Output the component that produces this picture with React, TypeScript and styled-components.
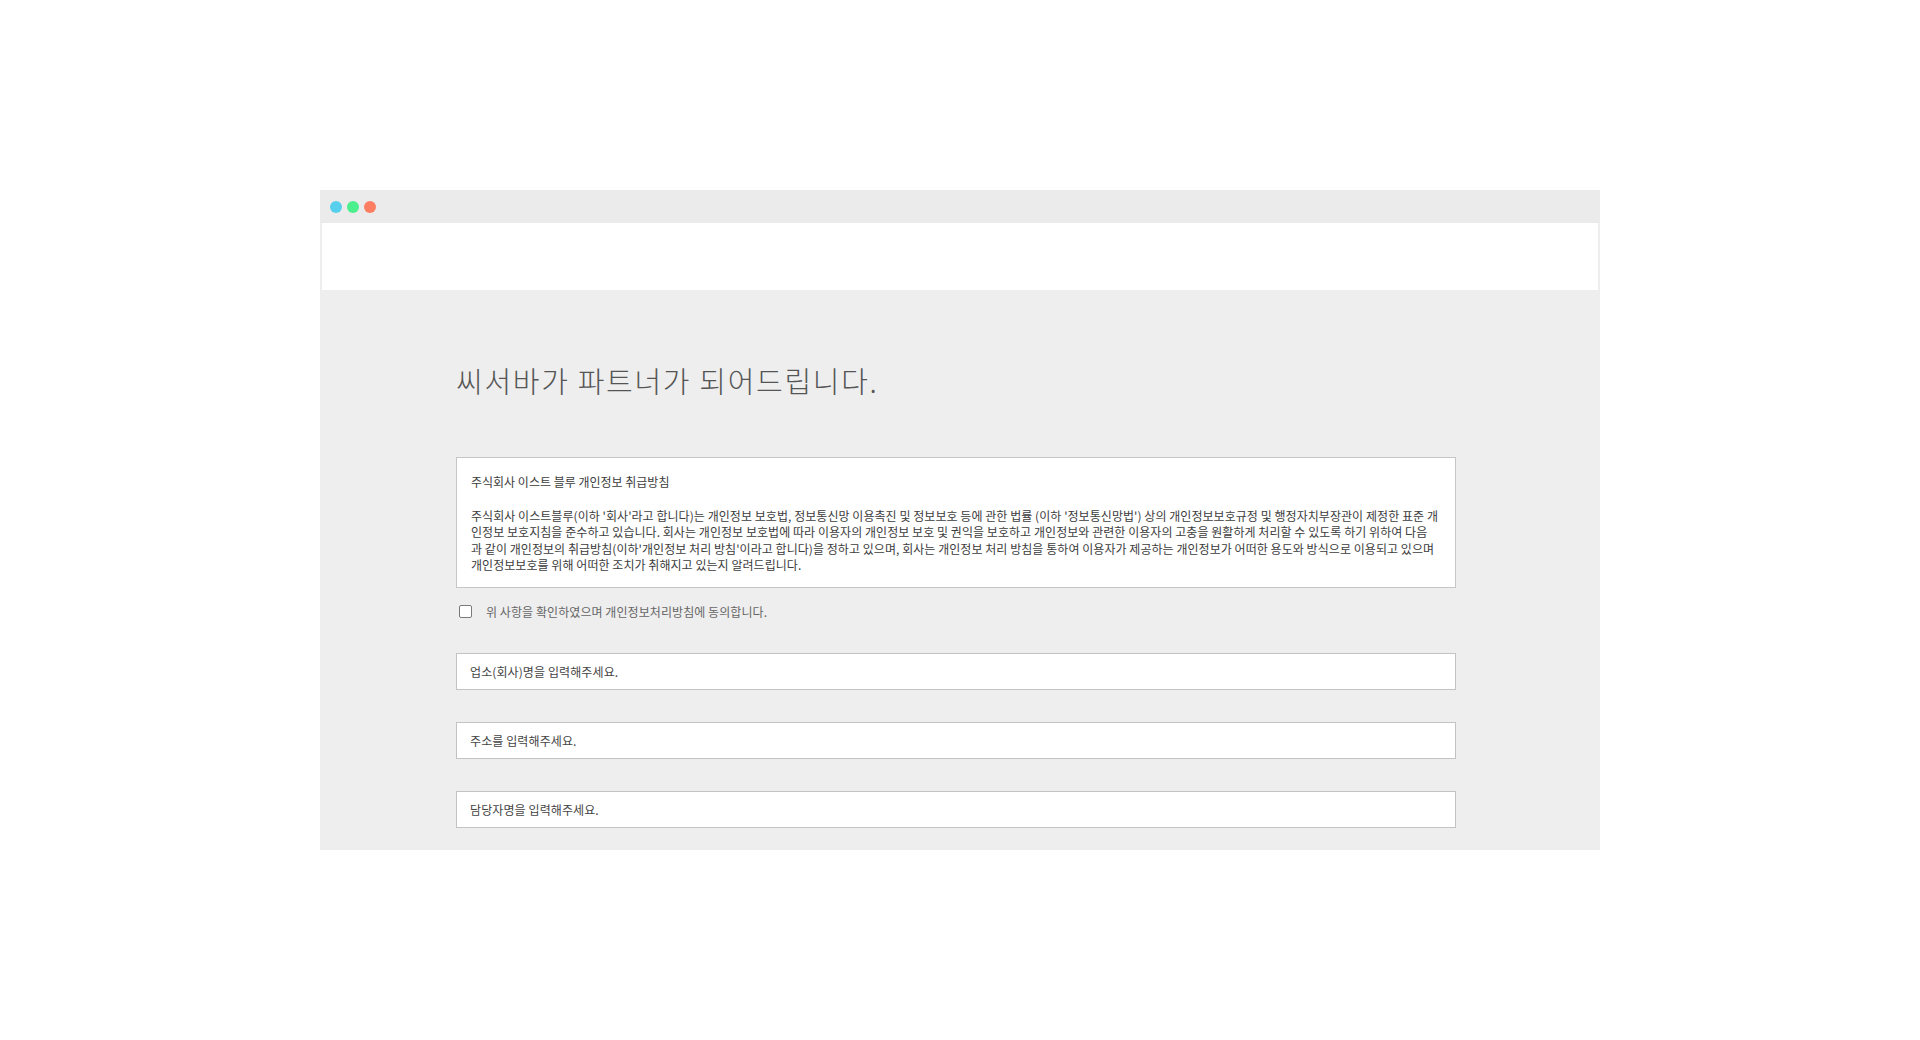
import React from "react";
import styled, { createGlobalStyle } from "styled-components";

const GlobalStyle = createGlobalStyle`
  html, body {
    margin: 0;
    padding: 0;
    background: #ffffff;
  }
  body {
    font-family: "Noto Sans CJK KR", "Noto Sans", sans-serif;
    color: #555;
  }
  * { box-sizing: border-box; }
`;

const Page = styled.div`
  display: flex;
  justify-content: center;
  padding-top: 190px;
  height: 1040px;
`;

const Window = styled.div`
  width: 1280px;
  height: 660px;
  display: flex;
  flex-direction: column;
  background: #eeeeee;
  overflow: hidden;
`;

const TitleBar = styled.div`
  height: 33px;
  flex: none;
  display: flex;
  align-items: center;
  gap: 5px;
  padding-left: 10px;
  background: #ebebeb;
`;

const Dot = styled.span<{ $color: string }>`
  width: 12px;
  height: 12px;
  border-radius: 50%;
  background: ${(p) => p.$color};
`;

const Header = styled.div`
  height: 67px;
  flex: none;
  margin: 0 2px;
  background: #ffffff;
`;

const Main = styled.main`
  flex: 1;
  padding-left: 136px;
  display: flex;
  flex-direction: column;
  align-items: flex-start;
`;

const Heading = styled.h1`
  margin: 74px 0 0;
  font-size: 29px;
  line-height: 32px;
  font-weight: 300;
  letter-spacing: 1.7px;
  color: #555;
`;

const PolicyBox = styled.div`
  width: 1000px;
  height: 131px;
  margin-top: 61px;
  padding: 16px 13px 13.5px 14px;
  background: #fff;
  border: 1px solid #c6c6c6;
  color: #3c3c3c;
  font-size: 12px;
  font-weight: 400;
  overflow: hidden;
`;

const PolicyTitle = styled.div`
  line-height: 15px;
  letter-spacing: 0;
`;

const PolicyText = styled.div`
  margin-top: 18.5px;
`;

const PolicyLine = styled.div`
  line-height: 16.5px;
  white-space: nowrap;
  letter-spacing: 0.05px;
`;

const AgreeRow = styled.label`
  display: flex;
  align-items: center;
  gap: 14px;
  margin-top: 17px;
  padding-left: 3px;
  height: 13px;
  font-size: 12px;
  color: #666;
  letter-spacing: 0.07px;
  cursor: pointer;
`;

const Check = styled.input`
  appearance: none;
  margin: 0;
  width: 13px;
  height: 13px;
  border: 1px solid #7a7a7a;
  border-radius: 2px;
  background: #fff;
`;

const Fields = styled.div`
  display: flex;
  flex-direction: column;
  gap: 32px;
  margin-top: 35px;
`;

const Field = styled.input`
  width: 1000px;
  height: 37px;
  padding: 0 13px;
  border: 1px solid #c3c3c3;
  background: #fff;
  font-family: inherit;
  font-size: 12px;
  font-weight: 400;
  letter-spacing: 0.1px;
  color: #444;
  outline: none;
  &::placeholder {
    color: #444;
  }
`;

const lines = [
  "주식회사 이스트블루(이하 '회사'라고 합니다)는 개인정보 보호법, 정보통신망 이용촉진 및 정보보호 등에 관한 법률 (이하 '정보통신망법') 상의 개인정보보호규정 및 행정자치부장관이 제정한 표준 개",
  "인정보 보호지침을 준수하고 있습니다. 회사는 개인정보 보호법에 따라 이용자의 개인정보 보호 및 권익을 보호하고 개인정보와 관련한 이용자의 고충을 원활하게 처리할 수 있도록 하기 위하여 다음",
  "과 같이 개인정보의 취급방침(이하'개인정보 처리 방침'이라고 합니다)을 정하고 있으며, 회사는 개인정보 처리 방침을 통하여 이용자가 제공하는 개인정보가 어떠한 용도와 방식으로 이용되고 있으며",
  "개인정보보호를 위해 어떠한 조치가 취해지고 있는지 알려드립니다.",
];

export default function App() {
  return (
    <>
      <GlobalStyle />
      <Page>
        <Window>
          <TitleBar>
            <Dot $color="#58cfec" />
            <Dot $color="#4cef8e" />
            <Dot $color="#fd7e61" />
          </TitleBar>
          <Header />
          <Main>
            <Heading>씨서바가 파트너가 되어드립니다.</Heading>
            <PolicyBox>
              <PolicyTitle>주식회사 이스트 블루 개인정보 취급방침</PolicyTitle>
              <PolicyText>
                {lines.map((l, i) => (
                  <PolicyLine key={i}>{l}</PolicyLine>
                ))}
              </PolicyText>
            </PolicyBox>
            <AgreeRow>
              <Check type="checkbox" />
              위 사항을 확인하였으며 개인정보처리방침에 동의합니다.
            </AgreeRow>
            <Fields>
              <Field placeholder="업소(회사)명을 입력해주세요." />
              <Field placeholder="주소를 입력해주세요." />
              <Field placeholder="담당자명을 입력해주세요." />
            </Fields>
          </Main>
        </Window>
      </Page>
    </>
  );
}
